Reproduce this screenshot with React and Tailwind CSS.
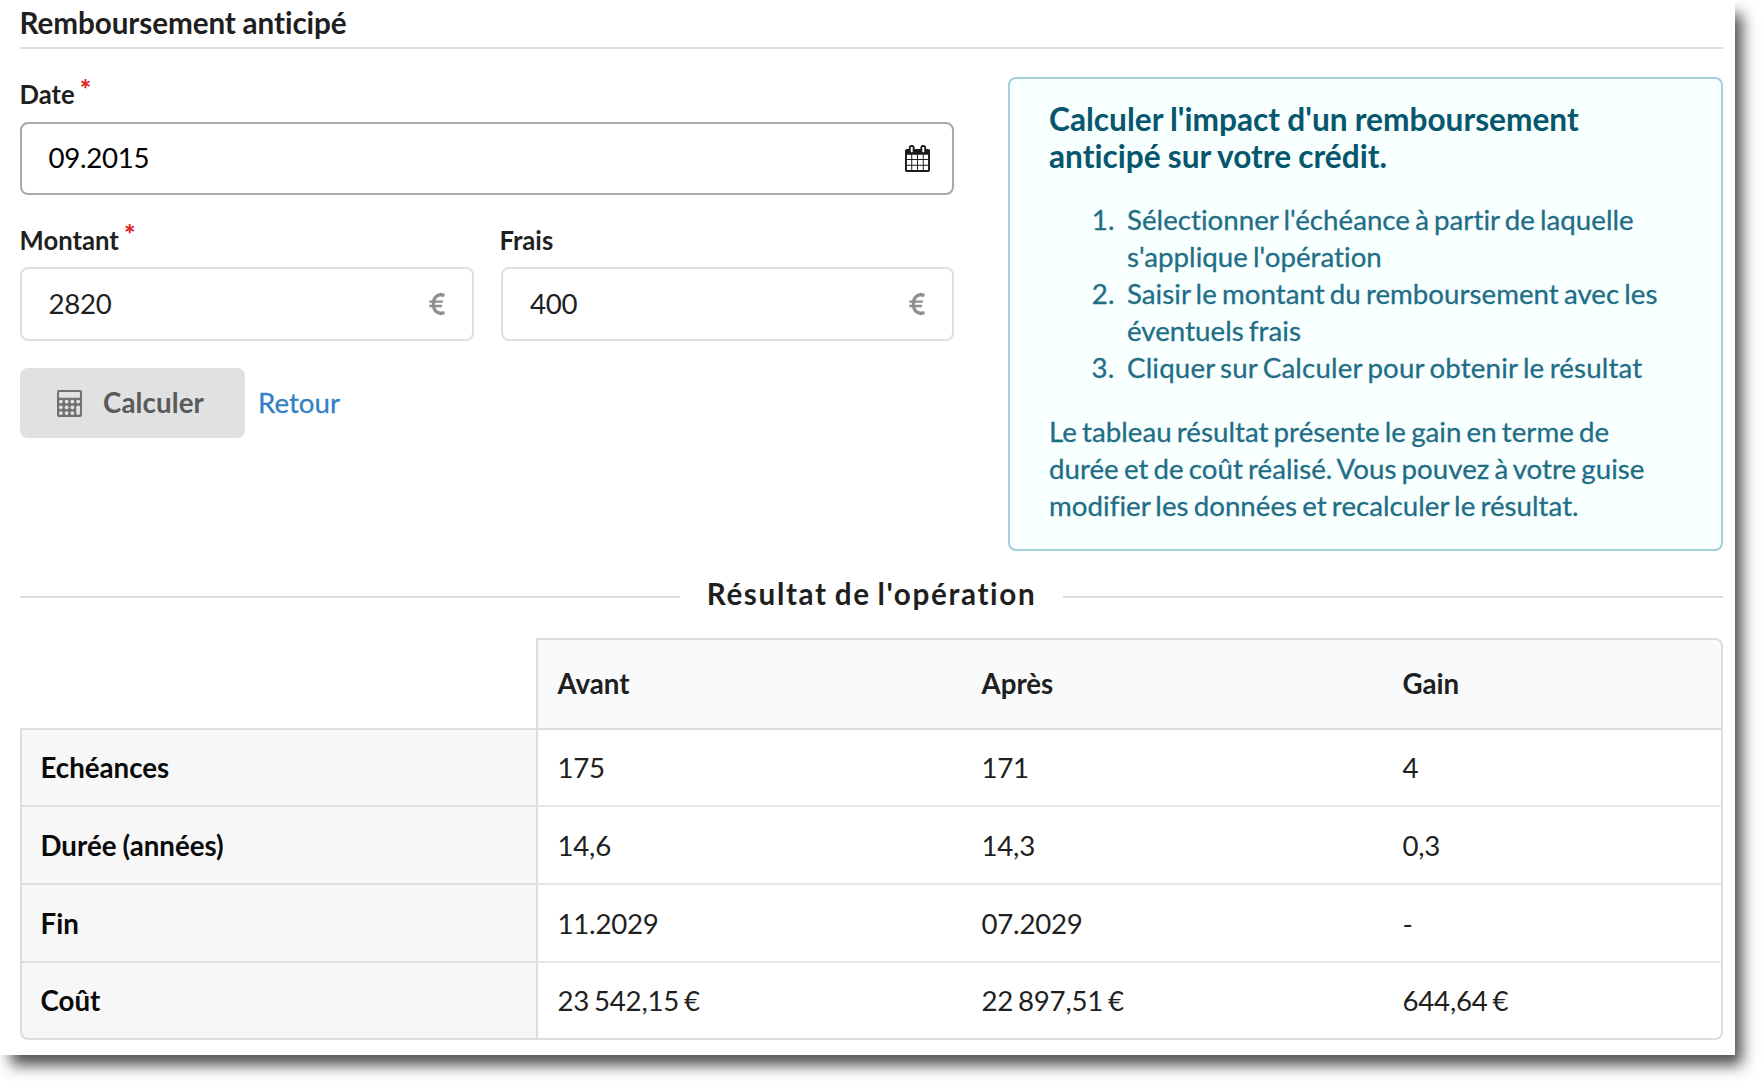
import React from "react";

const rows = [
  ["Echéances", "175", "171", "4"],
  ["Durée (années)", "14,6", "14,3", "0,3"],
  ["Fin", "11.2029", "07.2029", "-"],
  ["Coût", "23 542,15 €", "22 897,51 €", "644,64 €"],
];

const rowHeights = ["h-[77px]", "h-[78px]", "h-[78px]", "h-[79px]"];

const steps = [
  ["Sélectionner l'échéance à partir de laquelle", "s'applique l'opération"],
  ["Saisir le montant du remboursement avec les", "éventuels frais"],
  ["Cliquer sur Calculer pour obtenir le résultat"],
];

function CalendarIcon() {
  return (
    <svg viewBox="64 0 1664 1792" className="mt-[-1px] h-[27px] w-[25px] fill-[#1b1b1b]">
      <path d="M192 1664h288v-288h-288v288zm352 0h320v-288h-320v288zm-352-352h288v-320h-288v320zm352 0h320v-320h-320v320zm-352-384h288v-288h-288v288zm736 736h320v-288h-320v288zm-384-736h320v-288h-320v288zm768 736h288v-288h-288v288zm-384-352h320v-320h-320v320zm-352-864v-288q0-13-9.5-22.5t-22.5-9.5h-64q-13 0-22.5 9.5t-9.5 22.5v288q0 13 9.5 22.5t22.5 9.5h64q13 0 22.5-9.5t9.5-22.5zm736 864h288v-320h-288v320zm-384-384h320v-288h-320v288zm384 0h288v-288h-288v288zm32-480v-288q0-13-9.5-22.5t-22.5-9.5h-64q-13 0-22.5 9.5t-9.5 22.5v288q0 13 9.5 22.5t22.5 9.5h64q13 0 22.5-9.5t9.5-22.5zm384-64v1280q0 52-38 90t-90 38h-1408q-52 0-90-38t-38-90v-1280q0-52 38-90t90-38h128v-96q0-66 47-113t113-47h64q66 0 113 47t47 113v96h384v-96q0-66 47-113t113-47h64q66 0 113 47t47 113v96h128q52 0 90 38t38 90z" />
    </svg>
  );
}

function CalculatorIcon() {
  const keys = [
    [384, 768], [768, 768], [1152, 768], [1536, 768],
    [384, 1152], [768, 1152], [1152, 1152],
    [384, 1536], [768, 1536], [1152, 1536],
  ];
  return (
    <svg viewBox="128 0 1664 1792" className="h-[27px] w-[25px]">
      <rect x="128" y="0" width="1664" height="1792" rx="128" fill="#707172" />
      <rect x="256" y="128" width="1408" height="384" rx="64" fill="#e0e1e2" />
      {keys.map(([x, y]) => (
        <circle key={`${x}-${y}`} cx={x} cy={y} r="128" fill="#e0e1e2" />
      ))}
      <rect x="1408" y="1024" width="256" height="640" rx="128" fill="#e0e1e2" />
    </svg>
  );
}

function EuroIcon() {
  return (
    <svg viewBox="0 0 16 22" className="mt-[-2px] mr-[5px] h-[22px] w-4 fill-none stroke-[#8f8f8f]">
      <path d="M15.4 2.6C9.6.2 4.4 3.4 4.4 11s5.2 10.8 11 8.4" strokeWidth="3.3" />
      <path d="M.3 8.6h13.6M.3 13h12.6" strokeWidth="2.4" />
    </svg>
  );
}

function Field({ label, required, value, icon, focused }) {
  return (
    <div className="flex flex-col">
      <div className={`flex h-9 text-[25.7px] font-bold ${focused ? "leading-9" : "leading-[38px]"}`}>
        <span className={required ? "" : "-ml-[1.5px]"}>{label}</span>
        {required && <span className="ml-[5px] text-[27px] font-black leading-[26px] text-[#e02525]">*</span>}
      </div>
      <div
        className={`mt-[10px] flex items-center justify-between rounded-[8px] border-2 pr-[22px] pl-[27px] tracking-[-0.3px] ${
          focused ? "h-[73px] border-[#a8a9aa] text-black" : "h-[74px] border-[#dedfdf] pt-px"
        }`}
      >
        <span>{value}</span>
        {icon}
      </div>
    </div>
  );
}

export default function App() {
  return (
    <div className="h-[1086px] w-[1762px] overflow-hidden bg-white font-['Lato',sans-serif] text-[27.68px] leading-[36.9px] text-[#1f1f1f] [font-variant-ligatures:none] [word-spacing:-1.95px]">
      <div className="flex h-[1055px] w-[1735px] flex-col bg-white pr-[12px] pl-[19.5px] shadow-[9px_12px_14px_-2px_rgba(0,0,0,0.7)]">
        <h1 className="h-[49px] shrink-0 border-b-2 border-[#dcdcdd] text-[29.65px] leading-[46px] font-bold tracking-[-0.08px] [word-spacing:-0.3px]">
          Remboursement anticipé
        </h1>

        <section className="mt-7 flex h-[473px] shrink-0 justify-between">
          <form className="-mt-px flex w-[934px] flex-col">
            <Field label="Date" required value="09.2015" focused icon={<CalendarIcon />} />
            <div className="mt-[26px] grid grid-cols-[454px_452.6px] justify-between">
              <Field label="Montant" required value="2820" icon={<EuroIcon />} />
              <Field label="Frais" value="400" icon={<EuroIcon />} />
            </div>
            <div className="mt-[27px] flex items-center">
              <button
                type="button"
                className="flex h-[70px] w-[225px] items-center rounded-[8px] bg-[#e0e1e2] pl-[37px] font-bold text-[#5a5a5b]"
              >
                <CalculatorIcon />
                <span className="ml-[21.5px] pt-px tracking-[0.1px]">Calculer</span>
              </button>
              <a className="ml-[13.5px] pt-px text-[#357fc5] [-webkit-text-stroke:0.3px_#357fc5]">Retour</a>
            </div>
          </form>

          <aside className="h-[474px] w-[715px] rounded-[8px] border-2 border-[#a3d1db] bg-[#f8ffff] pt-[22px] pl-[39px] text-[#1f6e86]">
            <h2 className="text-[31.63px] font-bold text-[#06576d] [word-spacing:-0.5px]">
              Calculer l'impact d'un remboursement
              <br />
              anticipé sur votre crédit.
            </h2>
            <div className="[-webkit-text-stroke:0.3px_#1f6e86]">
              <ol className="mt-[27.4px]">
                {steps.map((lines, i) => (
                  <li key={i} className={`flex ${i === 2 ? "tracking-[0.16px]" : "tracking-[0.02px]"}`}>
                    <span className="mr-[12.5px] w-[65.5px] text-right">{i + 1}.</span>
                    <span className="flex flex-col">
                      {lines.map((line) => (
                        <span key={line}>{line}</span>
                      ))}
                    </span>
                  </li>
                ))}
              </ol>
              <p className="mt-[27.3px] tracking-[0.02px]">
                Le tableau résultat présente le gain en terme de
                <br />
                durée et de coût réalisé. Vous pouvez à votre guise
                <br />
                modifier les données et recalculer le résultat.
              </p>
            </div>
          </aside>
        </section>

        <div className="flex h-[88px] shrink-0 items-center gap-[28.5px] pt-[5px]">
          <span className="h-[2px] flex-1 bg-[#dcdcdd]" />
          <span className="-mr-[1px] -ml-[1.5px] pb-[4px] text-[29.65px] font-bold tracking-[1.65px]">
            Résultat de l'opération
          </span>
          <span className="-ml-[1px] h-[2px] flex-1 bg-[#dcdcdd]" />
        </div>

        <table className="h-[402px] w-full shrink-0 table-fixed border-separate border-spacing-0 text-left">
          <colgroup>
            <col className="w-[516px]" />
            <col className="w-[425px]" />
            <col className="w-[421px]" />
            <col />
          </colgroup>
          <thead>
            <tr className="h-[90px]">
              <th />
              <th className="border-t-2 border-l-2 border-[#dcddde] bg-[#f9fafb] pt-px pl-5">Avant</th>
              <th className="border-t-2 border-[#dcddde] bg-[#f9fafb] pt-px pl-[21px]">Après</th>
              <th className="rounded-tr-[8px] border-t-2 border-r-2 border-[#dcddde] bg-[#f9fafb] pt-px pl-[21px]">Gain</th>
            </tr>
          </thead>
          <tbody>
            {rows.map(([name, before, after, gain], i) => {
              const last = i === rows.length - 1;
              const line = i === 0 ? "border-t-[#dcddde]" : "border-t-[#e6e6e7]";
              const bottom = last ? "border-b-2 border-b-[#dcddde]" : "";
              return (
                <tr key={name} className={`${rowHeights[i]} tracking-[-0.25px]`}>
                  <th
                    className={`border-t-2 border-l-2 border-t-[#dededf] border-l-[#dcddde] bg-[#f7f7f7] pt-[2px] pl-[19px] tracking-normal text-[#0a0a0a] [word-spacing:-0.6px] ${bottom} ${
                      last ? "rounded-bl-[8px]" : ""
                    }`}
                  >
                    {name}
                  </th>
                  <td className={`border-t-2 border-l-2 border-l-[#dcddde] pt-[2px] pl-5 ${line} ${bottom}`}>{before}</td>
                  <td className={`border-t-2 pt-[2px] pl-[21px] ${line} ${bottom}`}>{after}</td>
                  <td
                    className={`border-t-2 border-r-2 border-r-[#dcddde] pt-[2px] pl-[21px] ${line} ${bottom} ${
                      last ? "rounded-br-[8px]" : ""
                    }`}
                  >
                    {gain}
                  </td>
                </tr>
              );
            })}
          </tbody>
        </table>
      </div>
    </div>
  );
}
